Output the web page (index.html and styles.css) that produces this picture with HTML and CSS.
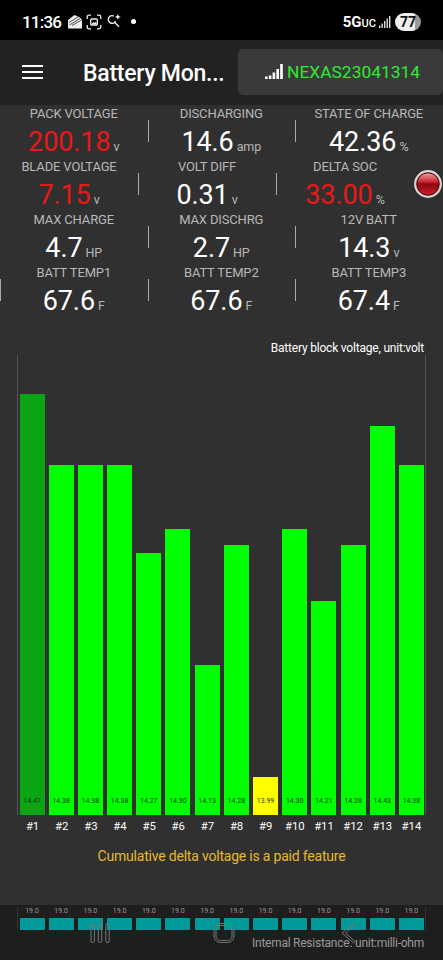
FILE: index.html
```html
<!doctype html>
<html lang="en-US">
  <head>
    <meta charset="utf-8" />
    <title>Battery Monitor</title>
    <link rel="stylesheet" href="styles.css">
  </head>
  <body>
    <div class="statusbar">
      <span class="clock">11:36</span>
      <svg class="ic-mail" width="16" height="16" viewBox="0 0 16 16">
        <path d="M1 6L7.5 1L13 3.5L15 6V14.5H1Z" fill="#eee"/>
        <path d="M2 8.5L11 3M2.5 11L13 4.5M5 11.5L14.5 6" fill="none" stroke="#222" stroke-width=".8"/>
      </svg>
      <svg class="ic-shot" width="16" height="16" viewBox="0 0 16 16" fill="none" stroke="#eee" stroke-width="1.3">
        <path d="M1.2 5V3Q1.2 1.2 3 1.2H5M11 1.2H13Q14.8 1.2 14.8 3V5M14.8 11V13Q14.8 14.8 13 14.8H11M5 14.8H3Q1.2 14.8 1.2 13V11"/>
        <rect x="4.7" y="5" width="6.6" height="6" rx="1"/>
        <path d="M5 10.5L7.5 8L8.7 9L10 7.8L11 10.5Z" fill="#eee" stroke="none"/>
      </svg>
      <svg class="ic-search" width="14" height="14" viewBox="0 0 14 14">
        <path d="M6.6 2A3.8 3.8 0 1 0 8.6 7M7.8 8.4L12 12.8" fill="none" stroke="#eee" stroke-width="1.4"/>
        <path d="M10.8 0L11.7 2L13.8 2.9L11.7 3.8L10.8 5.8L9.9 3.8L7.8 2.9L9.9 2Z" fill="#eee"/>
      </svg>
      <span class="dot"></span>
      <span class="net">5G<small>UC</small></span>
      <svg class="ic-bars" width="12" height="12" viewBox="0 0 12 12" fill="#ddd">
        <path d="M0 9.5h1.4V12H0zM2.5 7.5h1.4V12H2.5zM5 5h1.4v7H5zM7.5 2.5h1.4V12H7.5zM10 0h1.4v12H10z"/>
      </svg>
      <span class="battery">77</span>
    </div>

    <div class="appbar">
      <div class="burger"><i></i><i></i><i></i></div>
      <h1>Battery Mon...</h1>
      <div class="device">
        <svg width="18" height="15" viewBox="0 0 18 15" fill="#fff">
          <path d="M0 12.5h2.6V15H0zM3.8 11.5h2.6V15H3.8zM7.6 8.5h2.6V15H7.6zM11.4 5h2.6v10h-2.6zM15.2 0h2.6v15h-2.6z"/>
        </svg>
        <span>NEXAS23041314</span>
      </div>
    </div>

    <div class="main">
      <div class="row">
        <div class="cell"><label>PACK VOLTAGE</label><p class="red">200.18<small>v</small></p></div>
        <div class="cell"><label>DISCHARGING</label><p>14.6<small>amp</small></p></div>
        <div class="cell"><label>STATE OF CHARGE</label><p>42.36<small>%</small></p></div>
      </div>
      <div class="row row-led">
        <div class="cell"><label>BLADE VOLTAGE</label><p class="red">7.15<small>v</small></p></div>
        <div class="cell"><label>VOLT DIFF</label><p>0.31<small>v</small></p></div>
        <div class="cell"><label>DELTA SOC</label><p class="red">33.00<small>%</small></p></div>
        <svg class="led" width="28" height="28" viewBox="0 0 28 28">
          <defs>
            <linearGradient id="ledRed" x1="0" y1="0" x2="0" y2="1">
              <stop offset="0" stop-color="#f0a0a0"/>
              <stop offset=".42" stop-color="#c8202c"/>
              <stop offset=".5" stop-color="#8c0610"/>
              <stop offset="1" stop-color="#d0202c"/>
            </linearGradient>
          </defs>
          <circle cx="14" cy="14" r="13" fill="#aaa" stroke="#d8d8d8" stroke-width="1.8"/>
          <circle cx="14" cy="14" r="11.2" fill="url(#ledRed)" stroke="#500" stroke-width="1"/>
        </svg>
      </div>
      <div class="row">
        <div class="cell"><label>MAX CHARGE</label><p>4.7<small>HP</small></p></div>
        <div class="cell"><label>MAX DISCHRG</label><p>2.7<small>HP</small></p></div>
        <div class="cell"><label>12V BATT</label><p>14.3<small>v</small></p></div>
      </div>
      <div class="row row-temp">
        <div class="cell"><label>BATT TEMP1</label><p>67.6<small>F</small></p></div>
        <div class="cell"><label>BATT TEMP2</label><p>67.6<small>F</small></p></div>
        <div class="cell"><label>BATT TEMP3</label><p>67.4<small>F</small></p></div>
      </div>

      <div class="chart-title">Battery block voltage, unit:volt</div>
      <div class="chart">
        <div class="bar max" style="height:421.5px">14.47</div>
        <div class="bar" style="height:350px">14.38</div>
        <div class="bar" style="height:350px">14.38</div>
        <div class="bar" style="height:350px">14.38</div>
        <div class="bar" style="height:262px">14.27</div>
        <div class="bar" style="height:286px">14.30</div>
        <div class="bar" style="height:150px">14.13</div>
        <div class="bar" style="height:270px">14.28</div>
        <div class="bar min" style="height:38.5px">13.99</div>
        <div class="bar" style="height:286px">14.30</div>
        <div class="bar" style="height:214px">14.21</div>
        <div class="bar" style="height:270px">14.28</div>
        <div class="bar" style="height:389.5px">14.43</div>
        <div class="bar" style="height:350px">14.38</div>
      </div>
      <div class="names">
        <span>#1</span><span>#2</span><span>#3</span><span>#4</span><span>#5</span><span>#6</span><span>#7</span>
        <span>#8</span><span>#9</span><span>#10</span><span>#11</span><span>#12</span><span>#13</span><span>#14</span>
      </div>
      <div class="paid">Cumulative delta voltage is a paid feature</div>
    </div>

    <div class="bottom">
      <div class="res">
        <span>19.0</span><span>19.0</span><span>19.0</span><span>19.0</span><span>19.0</span><span>19.0</span><span>19.0</span>
        <span>19.0</span><span>19.0</span><span>19.0</span><span>19.0</span><span>19.0</span><span>19.0</span><span>19.0</span>
      </div>
      <div class="res-title">Internal Resistance. unit:milli-ohm</div>
      <!-- system navigation keys -->
      <svg class="nav" width="443" height="55" viewBox="0 0 443 55" fill="none" stroke="#777" stroke-width="1">
        <rect x="91" y="18.5" width="3.4" height="19" rx="1.2"/>
        <rect x="98.3" y="18.5" width="3.4" height="19" rx="1.2"/>
        <rect x="105.8" y="18.5" width="3.4" height="19" rx="1.2"/>
        <rect x="214" y="18.5" width="20" height="19" rx="6.5"/>
        <rect x="216" y="20.5" width="16" height="15" rx="4.5"/>
        <path d="M353.5 18L342 28L353.5 38L355 36.5L345.5 28L355 19.5Z"/>
      </svg>
    </div>
  </body>
</html>
```
FILE: styles.css
```css
* { box-sizing: border-box; }
body {
  margin: 0;
  width: 443px;
  height: 960px;
  overflow: hidden;
  background-color: #303030;
  color: white;
  font-family: Roboto, sans-serif;
}

/* phone status bar */
.statusbar {
  height: 40px;
  padding: 3px 22px 0 22px;
  display: flex;
  align-items: center;
  background-color: black;
}
.clock {
  width: 45px;
  font-size: 17px;
  font-weight: 500;
  letter-spacing: -0.8px;
}
.ic-shot { margin-left: 3px; }
.ic-search { margin-left: 5px; margin-top: -2px; }
.dot {
  width: 5px;
  height: 5px;
  margin-left: 10px;
  border-radius: 50%;
  background-color: white;
}
.net {
  margin-left: auto;
  font-size: 15px;
  font-weight: 700;
}
.net small { font-size: 11px; font-weight: 500; }
.ic-bars { margin-left: 3px; }
.battery {
  width: 26px;
  height: 18px;
  margin-left: 4px;
  border-radius: 9px;
  background: linear-gradient(to right, #eee 77%, #999 77%);
  color: #111;
  font-size: 14px;
  font-weight: 700;
  line-height: 18px;
  text-align: center;
}

.appbar {
  height: 65px;
  display: flex;
  align-items: center;
  background-color: #222;
}
.burger {
  width: 21px;
  height: 14px;
  margin: 0 0 2px 22px;
  display: flex;
  flex-direction: column;
  justify-content: space-between;
}
.burger i { height: 2px; background-color: white; }
h1 {
  width: 155px;
  margin: 2px 0 0 40px;
  font-size: 23px;
  font-weight: 500;
  letter-spacing: -0.25px;
  white-space: nowrap;
}
.device {
  width: 205px;
  height: 46px;
  padding-left: 27px;
  margin-bottom: 2px;
  display: flex;
  align-items: center;
  border-radius: 5px;
  background-color: #3a3a3c;
}
.device span {
  margin-left: 4px;
  color: #2cec2c;
  font-size: 17.4px;
  white-space: nowrap;
}

/* readings */
.main { height: 800px; }
.row { height: 53px; display: flex; }
.cell {
  position: relative;
  width: 147.5px;
  text-align: center;
  white-space: nowrap;
}
.row-led { position: relative; }
.row-led .cell { width: 138px; }
.cell + .cell::before, .row-temp .cell::before {
  content: "";
  position: absolute;
  left: 0;
  top: 15px;
  width: 1px;
  height: 22px;
  background-color: #aaa;
}
label {
  display: block;
  padding-top: 1px;
  color: #b8b8b8;
  font-size: 13px;
  line-height: 16px;
  letter-spacing: -0.15px;
}
.cell p {
  margin: 4px 0 0;
  font-size: 27px;
  line-height: 32px;
  letter-spacing: -0.1px;
}
.cell p small { margin-left: 3px; color: #b8b8b8; font-size: 12.5px; }
.cell p.red { color: #e81818; }
.led { position: absolute; left: 414px; top: 12px; }

.chart-title {
  height: 38px;
  padding: 23px 19px 0 0;
  font-size: 12px;
  line-height: 16px;
  letter-spacing: -0.2px;
  text-align: right;
}
.chart {
  height: 460px;
  margin: 0 17px;
  padding: 0 1px 0 1.5px;
  display: grid;
  grid-template-columns: repeat(14, 25px);
  justify-content: space-between;
  align-items: end;
  border: solid #555;
  border-width: 0 1px;
}
.bar {
  display: flex;
  align-items: flex-end;
  justify-content: center;
  padding-bottom: 9px;
  background-color: #00ff00;
  color: #064006;
  font-size: 7px;
  line-height: 9px;
}
.bar.max { background-color: #0aa514; }
.bar.min { background-color: #ffff00; color: #333; }
.names {
  margin: 5px 17px 0 18px;
  display: grid;
  grid-template-columns: repeat(14, 1fr);
  font-size: 11.3px;
  line-height: 14px;
  text-align: center;
}
.paid {
  margin-top: 13px;
  color: #e8b830;
  font-size: 14px;
  line-height: 18px;
  letter-spacing: -0.2px;
  text-align: center;
}

/* resistance strip under the nav keys */
.bottom {
  position: relative;
  height: 55px;
  padding-top: 2px;
  background-color: #1e1e1e;
}
.res {
  height: 23px;
  margin: 0 17px;
  padding: 0 1px 0 1.5px;
  display: grid;
  grid-template-columns: repeat(14, 25px);
  justify-content: space-between;
  border: solid #333;
  border-width: 0 1px;
}
.res span {
  color: #999;
  font-size: 7px;
  line-height: 8px;
  text-align: center;
  border-bottom: 12px solid #009a9a;
}
.res-title {
  margin: 5px 19px 0 0;
  color: #999;
  font-size: 12px;
  line-height: 16px;
  letter-spacing: -0.25px;
  text-align: right;
}
.nav { position: absolute; left: 0; top: 0; }
```
